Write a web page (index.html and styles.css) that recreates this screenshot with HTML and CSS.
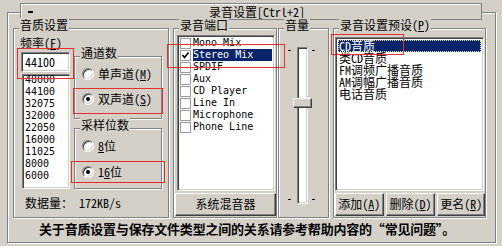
FILE: index.html
```html
<html>
    <head>
        <link rel="stylesheet" href="styles.css">
    </head>
    <body>
        <div class="frame">
            <div class="titlebar"><span class="dash"></span><span class="title">录音设置[Ctrl+2]</span></div>
            <div class="groups">
                <!-- quality settings -->
                <div class="group g-quality">
                    <div class="caption">音质设置</div>
                    <div class="quality-body">
                        <div class="freq">
                            <div class="label">频率(<u>F</u>)</div>
                            <div class="sunken edit">44100</div>
                            <div class="sunken freq-list">
                                <div>48000</div>
                                <div>44100</div>
                                <div>32075</div>
                                <div>32000</div>
                                <div>22050</div>
                                <div>16000</div>
                                <div>11025</div>
                                <div>8000</div>
                                <div>6000</div>
                            </div>
                        </div>
                        <div class="subgroups">
                            <div class="group g-channel">
                                <div class="caption">通道数</div>
                                <div class="radio-row"><span class="radio"></span>单声道(<u>M</u>)</div>
                                <div class="radio-row"><span class="radio checked"></span>双声道(<u>S</u>)</div>
                            </div>
                            <div class="group g-bits">
                                <div class="caption">采样位数</div>
                                <div class="radio-row"><span class="radio"></span><u>8</u>位</div>
                                <div class="radio-row"><span class="radio checked"></span>1<u>6</u>位</div>
                            </div>
                        </div>
                    </div>
                    <div class="datarate">数据量： 172KB/s</div>
                </div>

                <!-- recording ports -->
                <div class="group g-ports">
                    <div class="caption">录音端口</div>
                    <div class="sunken port-list">
                        <div class="port"><span class="check"></span><span class="name">Mono Mix</span></div>
                        <div class="port"><span class="check"><svg width="9" height="9" viewBox="0 0 9 9"><path d="M1.5 4 L3.5 6.5 L7.5 1.5" fill="none" stroke="#000" stroke-width="1.7"/></svg></span><span class="name sel">Stereo Mix</span></div>
                        <div class="port"><span class="check"></span><span class="name">SPDIF</span></div>
                        <div class="port"><span class="check"></span><span class="name">Aux</span></div>
                        <div class="port"><span class="check"></span><span class="name">CD Player</span></div>
                        <div class="port"><span class="check"></span><span class="name">Line In</span></div>
                        <div class="port"><span class="check"></span><span class="name">Microphone</span></div>
                        <div class="port"><span class="check"></span><span class="name">Phone Line</span></div>
                    </div>
                    <div class="button mixer-btn">系统混音器</div>
                </div>

                <!-- volume -->
                <div class="group g-volume">
                    <div class="caption">音量</div>
                    <div class="slider">
                        <div class="ticks"><span></span><span></span></div>
                        <div class="track"><div class="thumb"></div></div>
                        <div class="ticks"><span></span><span></span></div>
                    </div>
                </div>

                <!-- presets -->
                <div class="group g-presets">
                    <div class="caption">录音设置预设(<u>P</u>)</div>
                    <div class="sunken preset-list">
                        <div class="preset sel">CD音质</div>
                        <div class="preset">类CD音质</div>
                        <div class="preset">FM调频广播音质</div>
                        <div class="preset">AM调幅广播音质</div>
                        <div class="preset">电话音质</div>
                    </div>
                    <div class="buttons">
                        <div class="button add-btn">添加(<u>A</u>)</div>
                        <div class="button del-btn">删除(<u>D</u>)</div>
                        <div class="button ren-btn">更名(<u>R</u>)</div>
                    </div>
                </div>
            </div>
            <div class="note">关于音质设置与保存文件类型之间的关系请参考帮助内容的“常见问题”。</div>
        </div>

        <!-- red annotation boxes -->
        <div class="mark mark-edit"></div>
        <div class="mark mark-stereo"></div>
        <div class="mark mark-16"></div>
        <div class="mark mark-port"></div>
        <div class="mark mark-cd"></div>
    </body>
</html>
```

FILE: styles.css
```css
body {
    margin: 0;
    width: 502px;
    height: 246px;
    position: relative;
    overflow: hidden;
    background-color: #d4d0c8;
    color: #000;
    font-family: "Noto Sans Mono CJK SC", "Noto Sans CJK SC", monospace;
    font-size: 12px;
}

u {
    text-underline-offset: 1px;
}

.frame {
    position: relative;
    box-sizing: border-box;
    margin: 12px 0 0 7px;
    width: 489px;
    height: 231px;
    padding: 15px 0 0 5px;
    border: 1px solid #808080;
    box-shadow: inset 1px 1px #fff, 1px 1px #fff;
}

.titlebar {
    position: absolute;
    left: 12px;
    top: -10px;
    box-sizing: border-box;
    width: 462px;
    height: 17px;
    display: flex;
    align-items: center;
    line-height: 15px;
    background-color: #d4d0c8;
    border: 1px solid #808080;
    box-shadow: inset 1px 1px #fff;
}

.dash {
    width: 5px;
    height: 2px;
    margin-left: 7px;
    background-color: #000;
}

.title {
    flex: 1;
    text-align: center;
}

.groups {
    display: flex;
    align-items: flex-start;
}

.group {
    position: relative;
    box-sizing: border-box;
    border: 1px solid #808080;
    box-shadow: inset 1px 1px #fff, 1px 1px #fff;
}

.caption {
    position: absolute;
    top: -11px;
    left: 5px;
    padding: 0 1px;
    line-height: 14px;
    background-color: #d4d0c8;
    white-space: nowrap;
}

.sunken {
    box-sizing: border-box;
    background-color: #fff;
    border: 1px solid;
    border-color: #808080 #fff #fff #808080;
    box-shadow: inset 1px 1px #404040, inset -1px -1px #d4d0c8;
    overflow: hidden;
}

.button {
    box-sizing: border-box;
    height: 23px;
    line-height: 20px;
    text-align: center;
    border: 1px solid;
    border-color: #fff #404040 #404040 #fff;
    box-shadow: inset -1px -1px #808080;
    white-space: nowrap;
}

/* quality group */
.g-quality {
    width: 156px;
    height: 190px;
    margin-right: 4px;
    padding: 7px 0 0 7px;
}

.quality-body {
    display: flex;
    align-items: flex-start;
}

.freq {
    width: 49px;
}

.label {
    height: 14px;
    line-height: 14px;
    margin-left: -1px;
    white-space: nowrap;
}

.edit {
    margin-top: 2px;
    height: 20px;
    line-height: 16px;
    padding: 1px 0 0 3px;
}

.freq-list {
    margin: 2px 0 0 1px;
    width: 48px;
    height: 115px;
    padding: 1px 0 0 2px;
    font-family: "DejaVu Sans Mono", monospace;
    font-size: 10px;
}

.freq-list div {
    height: 12px;
    line-height: 12px;
}

.freq-list div:first-child {
    margin-top: -2px;
}

.subgroups {
    width: 88px;
    margin: 20px 0 0 4px;
}

.g-channel {
    height: 63px;
    padding: 10px 0 0 7px;
}

.g-bits {
    height: 61px;
    margin-top: 9px;
    padding: 10px 0 0 7px;
}

.radio-row {
    display: flex;
    align-items: center;
    height: 14px;
    line-height: 14px;
    white-space: nowrap;
}

.radio-row + .radio-row {
    margin-top: 11px;
}

.g-bits .radio-row + .radio-row {
    margin-top: 12px;
}

.radio {
    position: relative;
    box-sizing: border-box;
    width: 12px;
    height: 12px;
    margin-right: 4px;
    border-radius: 50%;
    background-color: #fff;
    border: 1px solid;
    border-color: #808080 #fff #fff #808080;
    box-shadow: inset 1px 1px #404040, inset -1px -1px #d4d0c8;
}

.radio.checked::after {
    content: "";
    position: absolute;
    left: 3px;
    top: 3px;
    width: 4px;
    height: 4px;
    border-radius: 50%;
    background-color: #000;
}

.datarate {
    margin-top: 7px;
    padding-left: 4px;
    line-height: 14px;
    white-space: pre;
}

/* ports group */
.g-ports {
    width: 104px;
    height: 190px;
    margin-right: 1px;
    padding: 6px 0 0 3px;
}

.port-list {
    width: 98px;
    height: 156px;
    padding-top: 1px;
    font-family: "DejaVu Sans Mono", monospace;
    font-size: 10px;
}

.port {
    display: flex;
    align-items: center;
    height: 12px;
    padding-left: 2px;
}

.check {
    box-sizing: border-box;
    display: flex;
    align-items: center;
    justify-content: center;
    width: 11px;
    height: 11px;
    margin-right: 2px;
    background-color: #fff;
    border: 1px solid #9a9a9a;
}

.name {
    flex: 1;
    height: 12px;
    line-height: 12px;
    margin-right: 2px;
    white-space: pre;
}

.sel {
    background-color: #0a246a;
    color: #fff;
}

.mixer-btn {
    width: 101px;
    margin: 2px 0 0 -2px;
}

/* volume group */
.g-volume {
    width: 51px;
    height: 190px;
    margin-right: 4px;
    padding: 18px 0 0 9px;
}

.slider {
    display: flex;
    height: 157px;
}

.ticks {
    box-sizing: border-box;
    width: 3px;
    display: flex;
    flex-direction: column;
    justify-content: space-between;
    padding: 3px 0 4px;
}

.ticks span {
    height: 1px;
    background-color: #000;
}

.track {
    position: relative;
    box-sizing: border-box;
    width: 11px;
    margin: 0 4px 0 6px;
    background-color: #fff;
    border: 1px solid;
    border-color: #808080 #fff #fff #808080;
    box-shadow: inset 1px 1px #404040, inset -1px -1px #d4d0c8;
}

.thumb {
    position: absolute;
    left: -5px;
    top: 50px;
    box-sizing: border-box;
    width: 19px;
    height: 10px;
    background-color: #d4d0c8;
    border: 1px solid;
    border-color: #fff #404040 #404040 #fff;
    box-shadow: inset -1px -1px #808080;
}

/* presets group */
.g-presets {
    width: 153px;
    height: 190px;
    padding: 8px 0 0 1px;
}

.preset-list {
    width: 149px;
    height: 154px;
    padding: 2px 2px 0 2px;
}

.preset {
    height: 12px;
    line-height: 12px;
    padding-left: 1px;
    white-space: nowrap;
}

.preset.sel {
    outline: 1px dotted #e8e4a0;
    outline-offset: -1px;
}

.buttons {
    display: flex;
    gap: 2px;
    margin-top: 2px;
}

.add-btn {
    width: 49px;
}

.del-btn {
    width: 50px;
}

.ren-btn {
    width: 48px;
}

.note {
    margin-top: 3px;
    padding-right: 14px;
    text-align: center;
    font-family: "Noto Sans CJK SC", sans-serif;
    font-size: 13px;
    font-weight: bold;
    line-height: 15px;
    letter-spacing: -0.2px;
    white-space: nowrap;
}

/* red annotation boxes */
.mark {
    position: absolute;
    box-sizing: border-box;
    border: 1px solid #e3302c;
}

.mark-edit {
    left: 17px;
    top: 48px;
    width: 57px;
    height: 31px;
}

.mark-stereo {
    left: 73px;
    top: 88px;
    width: 90px;
    height: 26px;
}

.mark-16 {
    left: 71px;
    top: 161px;
    width: 94px;
    height: 22px;
}

.mark-port {
    left: 167px;
    top: 44px;
    width: 118px;
    height: 24px;
}

.mark-cd {
    left: 331px;
    top: 34px;
    width: 73px;
    height: 21px;
}
```
